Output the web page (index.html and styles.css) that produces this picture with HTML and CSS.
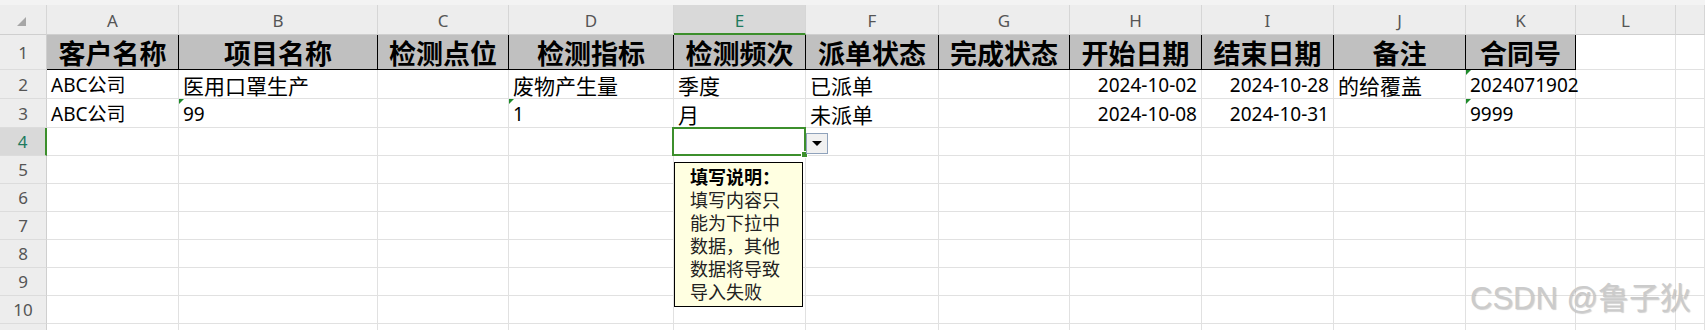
FILE: index.html
```html
<!DOCTYPE html>
<html lang="zh-CN">
<head>
    <meta charset="UTF-8">
    <meta name="viewport" content="width=device-width, initial-scale=1.0">
    <title>检测派单表</title>
    <link rel="stylesheet" href="styles.css">
</head>
<body>
<div class="wrap">
    <div class="topbar"></div>

    <div class="sheet">
        <!-- 列标题 -->
        <div class="ch corner"><span class="tri"></span></div>
        <div class="ch">A</div><div class="ch">B</div><div class="ch">C</div><div class="ch">D</div>
        <div class="ch sel">E</div><div class="ch">F</div><div class="ch">G</div><div class="ch">H</div>
        <div class="ch">I</div><div class="ch">J</div><div class="ch">K</div><div class="ch">L</div><div class="ch"></div>

        <!-- 第1行 表头 -->
        <div class="rh">1</div>
        <div class="hd">客户名称</div><div class="hd">项目名称</div><div class="hd">检测点位</div><div class="hd">检测指标</div>
        <div class="hd">检测频次</div><div class="hd">派单状态</div><div class="hd">完成状态</div><div class="hd">开始日期</div>
        <div class="hd">结束日期</div><div class="hd">备注</div><div class="hd">合同号</div>
        <div class="c"></div><div class="c"></div>

        <!-- 第2行 -->
        <div class="rh">2</div>
        <div class="c">ABC公司</div><div class="c zh">医用口罩生产</div><div class="c"></div><div class="c zh">废物产生量</div>
        <div class="c zh">季度</div><div class="c zh">已派单</div><div class="c"></div><div class="c num">2024-10-02</div>
        <div class="c num">2024-10-28</div><div class="c zh">的给覆盖</div><div class="c tn">2024071902</div>
        <div class="c"></div><div class="c"></div>

        <!-- 第3行 -->
        <div class="rh">3</div>
        <div class="c">ABC公司</div><div class="c tn">99</div><div class="c"></div><div class="c tn">1</div>
        <div class="c zh">月</div><div class="c zh">未派单</div><div class="c"></div><div class="c num">2024-10-08</div>
        <div class="c num">2024-10-31</div><div class="c"></div><div class="c tn">9999</div>
        <div class="c"></div><div class="c"></div>

        <div class="rh sel">4</div>
        <div class="c"></div><div class="c"></div><div class="c"></div><div class="c"></div><div class="c"></div><div class="c"></div><div class="c"></div>
        <div class="c"></div><div class="c"></div><div class="c"></div><div class="c"></div><div class="c"></div><div class="c"></div>

        <div class="rh">5</div>
        <div class="c"></div><div class="c"></div><div class="c"></div><div class="c"></div><div class="c"></div><div class="c"></div><div class="c"></div>
        <div class="c"></div><div class="c"></div><div class="c"></div><div class="c"></div><div class="c"></div><div class="c"></div>

        <div class="rh">6</div>
        <div class="c"></div><div class="c"></div><div class="c"></div><div class="c"></div><div class="c"></div><div class="c"></div><div class="c"></div>
        <div class="c"></div><div class="c"></div><div class="c"></div><div class="c"></div><div class="c"></div><div class="c"></div>

        <div class="rh">7</div>
        <div class="c"></div><div class="c"></div><div class="c"></div><div class="c"></div><div class="c"></div><div class="c"></div><div class="c"></div>
        <div class="c"></div><div class="c"></div><div class="c"></div><div class="c"></div><div class="c"></div><div class="c"></div>

        <div class="rh">8</div>
        <div class="c"></div><div class="c"></div><div class="c"></div><div class="c"></div><div class="c"></div><div class="c"></div><div class="c"></div>
        <div class="c"></div><div class="c"></div><div class="c"></div><div class="c"></div><div class="c"></div><div class="c"></div>

        <div class="rh">9</div>
        <div class="c"></div><div class="c"></div><div class="c"></div><div class="c"></div><div class="c"></div><div class="c"></div><div class="c"></div>
        <div class="c"></div><div class="c"></div><div class="c"></div><div class="c"></div><div class="c"></div><div class="c"></div>

        <div class="rh">10</div>
        <div class="c"></div><div class="c"></div><div class="c"></div><div class="c"></div><div class="c"></div><div class="c"></div><div class="c"></div>
        <div class="c"></div><div class="c"></div><div class="c"></div><div class="c"></div><div class="c"></div><div class="c"></div>

        <!-- 第11行只露出一条边 -->
        <div class="rh"></div>
        <div class="c"></div><div class="c"></div><div class="c"></div><div class="c"></div><div class="c"></div><div class="c"></div><div class="c"></div>
        <div class="c"></div><div class="c"></div><div class="c"></div><div class="c"></div><div class="c"></div><div class="c"></div>
    </div>

    <!-- 选中单元格 E4 + 下拉按钮 + 输入提示 -->
    <div class="selbox"><span class="handle"></span></div>
    <div class="dropbtn"><span class="arrow"></span></div>
    <div class="tip">
        <b>填写说明：</b><br>
        填写内容只<br>
        能为下拉中<br>
        数据，其他<br>
        数据将导致<br>
        导入失败
    </div>

    <div class="mark">CSDN @鲁子狄</div>
</div>
</body>
</html>
```

FILE: styles.css
```css
body {
    margin: 0;
    background: #fff;
    font-family: "Noto Sans", "Noto Sans CJK SC", sans-serif;
    overflow: hidden;
}
.wrap {
    position: relative;
    width: 1705px;
    height: 330px;
    overflow: hidden;
}
.topbar {
    height: 5px;
    background: #f3f3f3;
}
.sheet {
    display: grid;
    grid-template-columns: 47px 132px 199px 131px 165px 132px 133px 131px 132px 132px 132px 110px 100px 1fr;
    grid-template-rows: 30px 35px 29px 29px 28px repeat(7, 28px);
}
.sheet > div {
    box-sizing: border-box;
    border-right: 1px solid #e1e1e1;
    border-bottom: 1px solid #e1e1e1;
    white-space: nowrap;
    display: flex;
    min-width: 0;
}

/* 列标题 / 行号 */
.ch, .rh {
    background: #ededed;
    color: #555;
    font-size: 17px;
    align-items: center;
    justify-content: center;
}
.sheet > .ch {
    border-right-color: #d6d6d6;
    border-bottom-color: #cfcfcf;
    padding-top: 2px;
}
.sheet > .rh {
    border-right-color: #cfcfcf;
    border-bottom-color: #dcdcdc;
}
.sheet > .ch.sel {
    background: #d9d9d9;
    color: #1e7b5e;
    border-bottom: 2px solid #3c8f2c;
}
.sheet > .rh.sel {
    background: #d9d9d9;
    color: #1e7b5e;
    border-right: 2px solid #3c8f2c;
}
.corner {
    position: relative;
}
.tri {
    position: absolute;
    right: 20px;
    bottom: 8px;
    width: 0;
    height: 0;
    border-left: 9px solid transparent;
    border-bottom: 9px solid #a6a6a6;
}

/* 第1行表头 */
.sheet > .hd {
    background: #c0c0c0;
    border-right-color: #000;
    border-bottom-color: #000;
    font-family: "Noto Sans CJK SC", sans-serif;
    font-weight: 700;
    font-size: 27px;
    line-height: 1;
    color: #000;
    align-items: center;
    justify-content: center;
    padding-top: 1px;
}

/* 数据单元格 */
.c {
    font-size: 19px;
    line-height: 24px;
    color: #000;
    align-items: flex-end;
    padding: 0 3px 1px 4px;
    overflow: visible;
}
.c.zh {
    font-family: "Noto Sans CJK SC", sans-serif;
    font-size: 21px;
    line-height: 26px;
    padding-bottom: 0;
}
.c.num {
    justify-content: flex-end;
    padding-right: 4px;
}
.c.tn {
    position: relative;
}
.c.tn::before {
    content: "";
    position: absolute;
    left: 0;
    top: 0;
    border-top: 5px solid #1e8a2a;
    border-right: 5px solid transparent;
}

/* 选中框 */
.selbox {
    position: absolute;
    left: 672px;
    top: 127px;
    width: 134px;
    height: 29px;
    box-sizing: border-box;
    border: 2px solid #3c8f2c;
}
.handle {
    position: absolute;
    right: -4px;
    bottom: -4px;
    width: 5px;
    height: 5px;
    background: #3c8f2c;
    border: 1px solid #fff;
}
.dropbtn {
    position: absolute;
    left: 806px;
    top: 133px;
    width: 22px;
    height: 21px;
    box-sizing: border-box;
    background: #f1f1f1;
    border: 1px solid #8fa2bb;
    display: flex;
    align-items: center;
    justify-content: center;
}
.arrow {
    width: 0;
    height: 0;
    border-left: 5px solid transparent;
    border-right: 5px solid transparent;
    border-top: 5px solid #000;
}

/* 输入提示 */
.tip {
    position: absolute;
    left: 674px;
    top: 162px;
    width: 129px;
    height: 145px;
    box-sizing: border-box;
    background: #ffffe1;
    border: 1px solid #000;
    padding: 2px 0 0 15px;
    font-family: "Noto Sans CJK SC", sans-serif;
    font-size: 18px;
    line-height: 23px;
    color: #222;
}
.tip b {
    color: #000;
}

/* 水印 */
.mark {
    position: absolute;
    left: 1470px;
    top: 280px;
    font-family: "Liberation Sans", "Noto Sans CJK SC", sans-serif;
    font-size: 31px;
    line-height: 38px;
    color: #cbcbcb;
    text-shadow: 1px 1px 1px rgba(0, 0, 0, 0.18);
    white-space: nowrap;
}
```
